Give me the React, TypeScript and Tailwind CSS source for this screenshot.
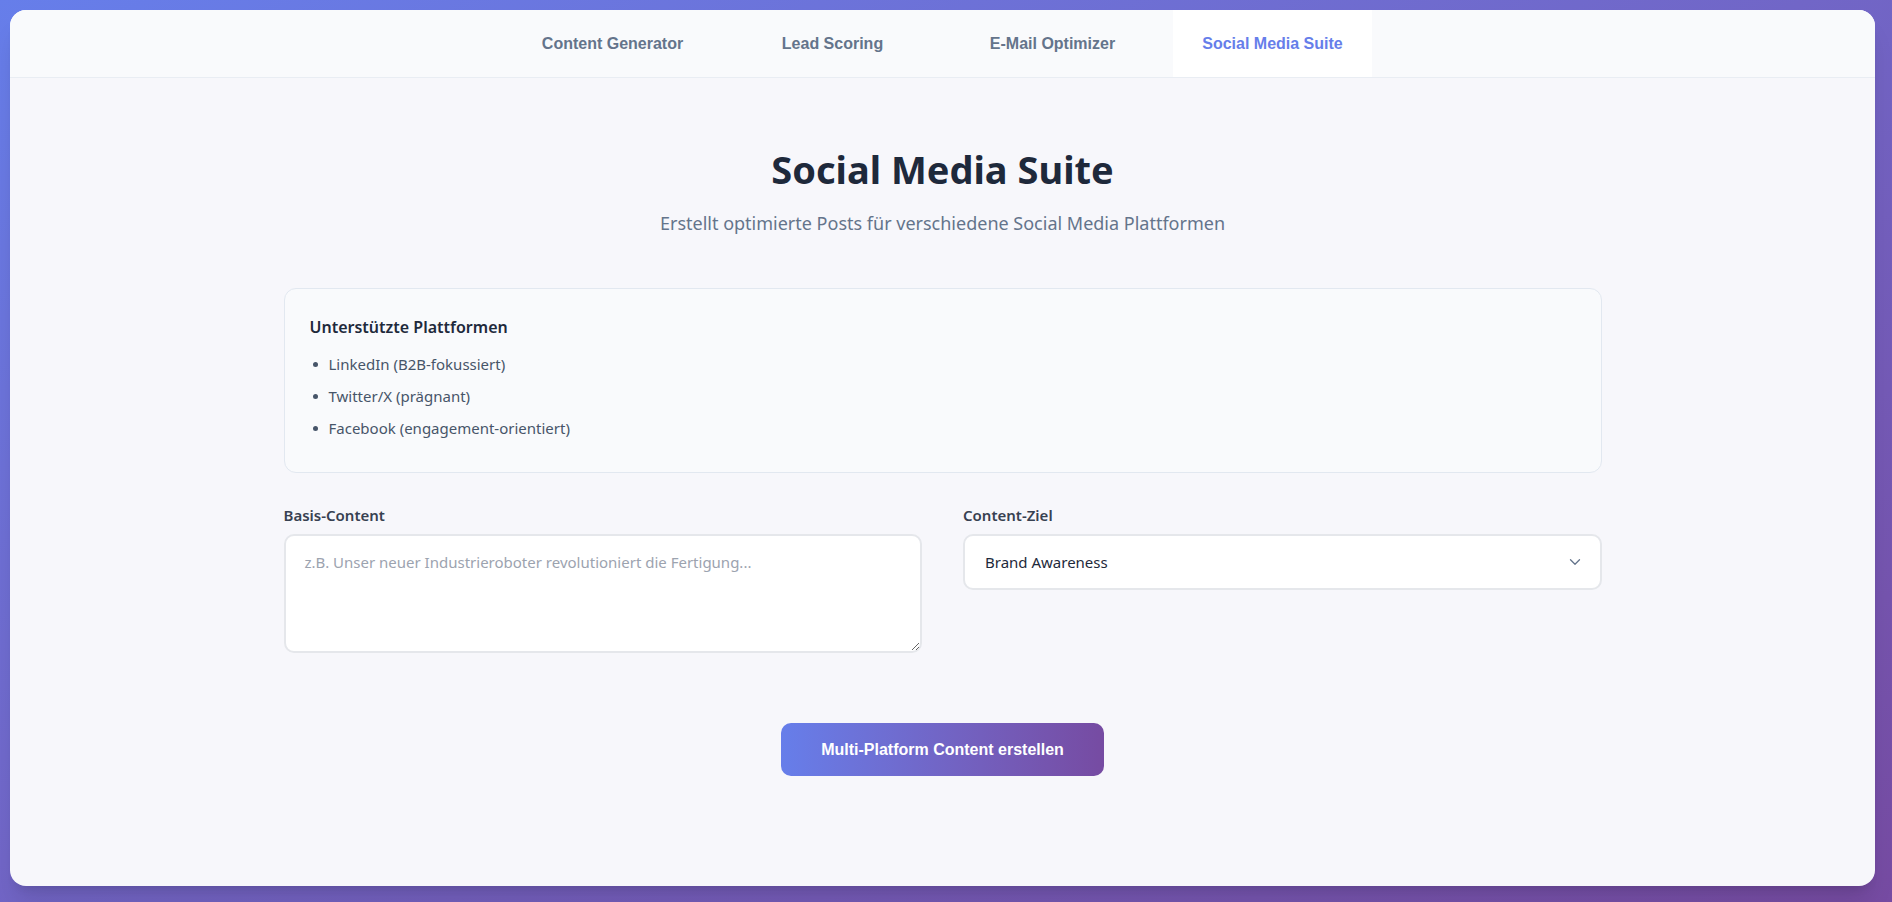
import { ChevronDown } from 'lucide-react';

const tabs = ['Content Generator', 'Lead Scoring', 'E-Mail Optimizer', 'Social Media Suite'];
const platforms = ['LinkedIn (B2B-fokussiert)', 'Twitter/X (prägnant)', 'Facebook (engagement-orientiert)'];

export default function App() {
  const active = 'Social Media Suite';

  return (
    <div className="min-h-[902px] w-full bg-gradient-to-br from-[#667eea] to-[#764ba2] pt-[10px] font-['Noto_Sans',sans-serif]">
      <div className="ml-[10px] flex h-[876px] w-[1865px] flex-col overflow-hidden rounded-2xl bg-[#f7f7fb] shadow-xl">
        {/* Tabs */}
        <nav className="flex h-[68px] shrink-0 items-stretch justify-center gap-[21px] border-b border-[#e9edf3] bg-[#f9fafc]">
          {tabs.map(tab => (
            <button
              key={tab}
              className={`w-[199px] text-center font-['Liberation_Sans',Arial,sans-serif] text-[16px] font-bold ${
                tab === active ? 'bg-white text-[#667eea]' : 'text-[#64748b]'
              }`}
            >
              {tab}
            </button>
          ))}
        </nav>

        <main className="mx-auto flex w-[1318px] flex-col">
          <h1 className="mt-[67px] text-center text-[38px] font-bold leading-[48px] text-[#1e293b]">Social Media Suite</h1>
          <p className="mt-[18px] text-center text-[18px] leading-[24px] text-[#64748b]">
            Erstellt optimierte Posts für verschiedene Social Media Plattformen
          </p>

          {/* Info box */}
          <div className="mt-[53px] h-[185px] rounded-xl border border-[#e2e8f0] bg-[#f9fafc] px-[25px] pt-[26px]">
            <h3 className="text-[16px] font-semibold leading-[24px] text-[#1e293b]">Unterstützte Plattformen</h3>
            <ul className="mt-[9px] flex flex-col">
              {platforms.map(p => (
                <li key={p} className="flex h-[32px] items-center text-[15px] text-[#475569]">
                  <span className="ml-[3px] mr-[11px] h-[5px] w-[5px] rounded-full bg-[#475569]" />
                  {p}
                </li>
              ))}
            </ul>
          </div>

          {/* Form */}
          <div className="mt-[31px] grid grid-cols-2 gap-[41px]">
            <div className="flex flex-col">
              <label className="text-[15px] font-semibold leading-[22px] text-[#374151]">Basis-Content</label>
              <textarea
                className="mt-[8px] h-[119px] rounded-[10px] border-2 border-[#e5e7eb] bg-white px-[19px] py-[15px] text-[15px] text-[#1e293b] outline-none placeholder:text-[#9ca3af]"
                placeholder="z.B. Unser neuer Industrieroboter revolutioniert die Fertigung..."
              />
            </div>
            <div className="flex flex-col">
              <label className="text-[15px] font-semibold leading-[22px] text-[#374151]">Content-Ziel</label>
              <div className="mt-[8px] flex h-[56px] items-center justify-between rounded-[10px] border-2 border-[#e5e7eb] bg-white pl-[20px] pr-[16px] text-[15px] text-[#1e293b]">
                <span>Brand Awareness</span>
                <ChevronDown className="h-[18px] w-[18px] text-[#64748b]" strokeWidth={1.75} />
              </div>
            </div>
          </div>

          <div className="mt-[70px] flex justify-center">
            <button className="h-[53px] w-[323px] rounded-[10px] bg-gradient-to-r from-[#667eea] to-[#764ba2] font-['Liberation_Sans',Arial,sans-serif] text-[16px] font-bold text-white">
              Multi-Platform Content erstellen
            </button>
          </div>
        </main>
      </div>
    </div>
  );
}
